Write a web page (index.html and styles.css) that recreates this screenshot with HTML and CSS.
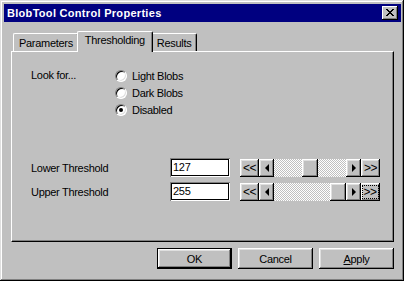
FILE: index.html
```html
<!DOCTYPE html>
<html lang="en">
	<head>
		<meta charset="UTF-8">
		<title>BlobTool Control Properties</title>
		<link rel="stylesheet" href="styles.css">
	</head>
	<body>
		<div class="window">
			<div class="titlebar">
				<span class="title">BlobTool Control Properties</span>
				<div class="close">
					<svg width="8" height="7" viewBox="0 0 8 7">
						<path d="M0 0h2v1H0zM6 0h2v1H6zM1 1h2v1H1zM5 1h2v1H5zM2 2h4v1H2zM3 3h2v1H3zM2 4h4v1H2zM1 5h2v1H1zM5 5h2v1H5zM0 6h2v1H0zM6 6h2v1H6z" fill="#000"/>
					</svg>
				</div>
			</div>
			<div class="content">
				<!-- tabs -->
				<div class="tabs">
					<div class="tab">Parameters</div>
					<div class="tab active">Thresholding</div>
					<div class="tab">Results</div>
				</div>
				<div class="page">
					<div class="lookfor">
						<div class="label">Look for...</div>
						<div class="radios">
							<div class="radio"><span class="circle"></span>Light Blobs</div>
							<div class="radio"><span class="circle"></span>Dark Blobs</div>
							<div class="radio"><span class="circle checked"></span>Disabled</div>
						</div>
					</div>
					<div class="thresholds">
						<div class="trow">
							<div class="tlabel">Lower Threshold</div>
							<div class="field">127</div>
							<div class="scroll">
								<div class="sbtn wide">&lt;&lt;</div>
								<div class="sbtn"><span class="tri left"></span></div>
								<div class="track"><div class="thumb" style="margin-left: 28px"></div></div>
								<div class="sbtn"><span class="tri right"></span></div>
								<div class="sbtn wide">&gt;&gt;</div>
							</div>
						</div>
						<div class="trow">
							<div class="tlabel">Upper Threshold</div>
							<div class="field">255</div>
							<div class="scroll">
								<div class="sbtn wide">&lt;&lt;</div>
								<div class="sbtn"><span class="tri left"></span></div>
								<div class="track"><div class="thumb" style="margin-left: 56px"></div></div>
								<div class="sbtn"><span class="tri right"></span></div>
								<div class="sbtn wide"><span class="focus">&gt;&gt;</span></div>
							</div>
						</div>
					</div>
				</div>
				<div class="actions">
					<div class="btn default">OK</div>
					<div class="btn">Cancel</div>
					<div class="btn"><u>A</u>pply</div>
				</div>
			</div>
		</div>
	</body>
</html>
```
FILE: styles.css
```css
* {
    margin: 0;
    padding: 0;
    box-sizing: border-box;
}
body {
    background: #c0c0c0;
    font: 11px "Liberation Sans", Arial, sans-serif;
    letter-spacing: -0.3px;
    color: #000;
}
.window {
    width: 404px;
    height: 281px;
    padding: 4px 3px 3px 4px;
    background: #c0c0c0;
    box-shadow: inset -1px -1px #000, inset 1px 1px #dfdfdf, inset -2px -2px #808080, inset 2px 2px #fff;
    display: flex;
    flex-direction: column;
}
.titlebar {
    height: 18px;
    background: #000080;
    color: #fff;
    display: flex;
    align-items: center;
    justify-content: space-between;
    padding: 0 3px 0 3px;
}
.title {
    font-weight: bold;
    font-size: 11px;
    letter-spacing: 0.3px;
}
.close {
    width: 16px;
    height: 14px;
    background: #c0c0c0;
    box-shadow: inset -1px -1px #000, inset 1px 1px #fff, inset -2px -2px #808080;
    display: flex;
    align-items: center;
    justify-content: center;
    padding-bottom: 1px;
}
.close svg {
    display: block;
}
.content {
    flex: 1;
    padding: 9px 7px 0 7px;
    display: flex;
    flex-direction: column;
}

/* tabs */
.tabs {
    display: flex;
    align-items: flex-end;
    height: 20px;
    padding-left: 2px;
    position: relative;
    z-index: 1;
}
.tab {
    height: 18px;
    padding: 3px 5px 0;
    background: #c0c0c0;
    border-top: 1px solid #fff;
    border-left: 1px solid #fff;
    border-right: 1px solid #000;
    box-shadow: inset -1px 0 #808080;
    border-radius: 2px 2px 0 0;
    white-space: nowrap;
}
.tab.active {
    height: 21px;
    margin: 0 -2px -1px;
    padding: 2px 7px 0;
    position: relative;
    z-index: 2;
}
.page {
    height: 191px;
    border: 1px solid;
    border-color: #fff #000 #000 #fff;
    box-shadow: inset -1px -1px #808080;
    padding: 15px 0 0 19px;
}

/* look for */
.lookfor {
    display: flex;
}
.lookfor .label {
    width: 84px;
    line-height: 17px;
}
.radio {
    display: flex;
    align-items: center;
    height: 17px;
    gap: 5px;
}
.circle {
    width: 12px;
    height: 12px;
    border-radius: 50%;
    background: #fff;
    border: 1px solid;
    border-color: #808080 #fff #fff #808080;
    box-shadow: inset 1px 1px #000, inset -1px -1px #dfdfdf;
    display: flex;
    align-items: center;
    justify-content: center;
}
.circle.checked::after {
    content: "";
    width: 4px;
    height: 4px;
    border-radius: 50%;
    background: #000;
}

/* thresholds */
.thresholds {
    margin-top: 40px;
}
.trow {
    display: flex;
    align-items: center;
    height: 19px;
    margin-bottom: 5px;
}
.tlabel {
    width: 139px;
}
.field {
    width: 60px;
    height: 19px;
    line-height: 19px;
    padding-left: 3px;
    background: #fff;
    box-shadow: inset 1px 1px #808080, inset -1px -1px #fff, inset 2px 2px #000, inset -2px -2px #000;
}
.scroll {
    display: flex;
    height: 18px;
    margin-left: 10px;
}
.sbtn {
    width: 15px;
    height: 18px;
    background: #c0c0c0;
    box-shadow: inset -1px -1px #000, inset 1px 1px #fff, inset -2px -2px #808080, inset 2px 2px #dfdfdf;
    display: flex;
    align-items: center;
    justify-content: center;
}
.sbtn.wide {
    width: 19px;
    font-size: 12px;
    letter-spacing: -0.5px;
}
.focus {
    border: 1px dotted #000;
    padding: 0 1px 0 0;
    line-height: 12px;
}
.tri {
    width: 0;
    height: 0;
    border-top: 4px solid transparent;
    border-bottom: 4px solid transparent;
}
.tri.left {
    border-right: 4px solid #000;
}
.tri.right {
    border-left: 4px solid #000;
}
.track {
    width: 72px;
    display: flex;
    background-color: #c0c0c0;
    background-image: repeating-conic-gradient(#c0c0c0 0 25%, #fff 0 50%);
    background-size: 2px 2px;
}
.thumb {
    width: 16px;
    height: 18px;
    background: #c0c0c0;
    box-shadow: inset -1px -1px #000, inset 1px 1px #fff, inset -2px -2px #808080, inset 2px 2px #dfdfdf;
}

/* buttons */
.actions {
    display: flex;
    justify-content: flex-end;
    gap: 6px;
    margin-top: 6px;
}
.btn {
    width: 75px;
    height: 21px;
    background: #c0c0c0;
    box-shadow: inset -1px -1px #000, inset 1px 1px #fff, inset -2px -2px #808080, inset 2px 2px #dfdfdf;
    display: flex;
    align-items: center;
    justify-content: center;
}
.btn.default {
    border: 1px solid #000;
}
```
